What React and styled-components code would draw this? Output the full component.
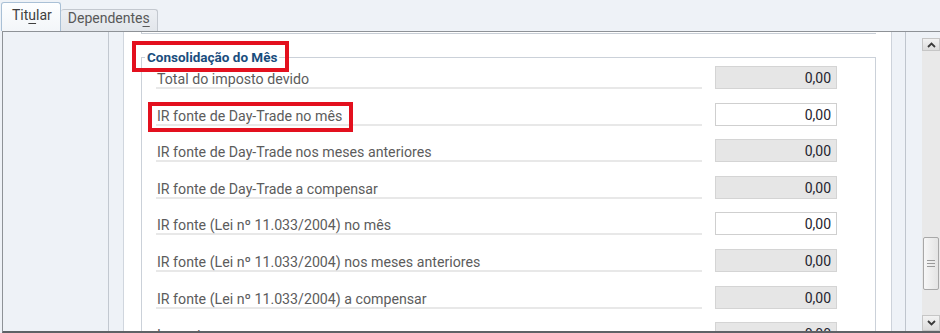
import React from 'react';
import styled, { createGlobalStyle, css } from 'styled-components';

const GlobalStyle = createGlobalStyle`
  html, body {
    margin: 0;
    padding: 0;
  }
  body {
    background: #eef2f7;
    font-family: Roboto, "Noto Sans", Arial, sans-serif;
    overflow: hidden;
  }
`;

const Page = styled.div`
  width: 940px;
  height: 333px;
  display: flex;
  flex-direction: column;
  overflow: hidden;
`;

const TabBar = styled.div`
  display: flex;
  align-items: flex-end;
  height: 31px;
  padding-left: 1px;
  flex-shrink: 0;
`;

const Tab = styled.div`
  box-sizing: border-box;
  font-size: 14px;
  line-height: 16px;
  border: 1px solid #c3c8cf;
  border-bottom: none;
  border-radius: 3px 3px 0 0;
  ${({ $active }) =>
    $active
      ? css`
          height: 29px;
          padding: 4px 8px 0 10px;
          color: #3f3f3f;
          background: linear-gradient(#fdfeff, #f3f6f9);
          border-color: #a9c0d6;
        `
      : css`
          height: 22px;
          padding: 0 7px 0 7px;
          color: #585858;
          background: linear-gradient(#eceff3, #e2e6eb);
          border-left: none;
        `}
`;

const Mnemonic = styled.span`
  text-decoration: underline;
  text-underline-offset: 3px;
`;

const Frame = styled.div`
  display: flex;
  height: 299px;
  margin-left: 2px;
  border-top: 1px solid #8e9297;
  border-left: 1px solid #8e9297;
  border-bottom: 2px solid #5e6266;
  flex-shrink: 0;
`;

const SidePanel = styled.div`
  width: 105px;
  flex-shrink: 0;
  background: #eef2f7;
  border-right: 1px solid #c2c8d0;
`;

const Gutter = styled.div`
  width: 14px;
  flex-shrink: 0;
  background: #eef2f7;
  border-right: 1px solid #d0d6de;
`;

const Content = styled.div`
  width: 767px;
  flex-shrink: 0;
  box-sizing: border-box;
  background: #fff;
  overflow: hidden;
  padding: 0 15px 0 17px;
`;

const PrevSectionEdge = styled.div`
  height: 1px;
  border-left: 1px solid #c8ced6;
  border-bottom: 1px solid #c8ced6;
`;

const Fieldset = styled.div`
  margin-top: 23px;
  border: 1px solid #cbd1d9;
  border-bottom: none;
  display: flex;
  flex-direction: column;
`;

const Annotated = css`
  position: relative;
  &::after {
    content: '';
    position: absolute;
    border: 4px solid #e3101e;
  }
`;

const Legend = styled.div`
  ${Annotated}
  align-self: flex-start;
  margin: -9px 0 0 3px;
  padding: 0 2px;
  background: #fff;
  font-size: 13.5px;
  line-height: 16px;
  font-weight: 700;
  color: #194d7d;
  &::after {
    top: -8px;
    bottom: -7px;
    left: -13px;
    right: -10px;
  }
`;

const Rows = styled.div`
  display: flex;
  flex-direction: column;
  gap: 13.6px;
  margin-top: 1px;
  padding: 0 38px 0 14px;
`;

const Row = styled.div`
  display: flex;
  align-items: flex-end;
  gap: 13px;
  height: 23px;
`;

const LabelCell = styled.div`
  flex: 1;
  height: 23px;
  box-sizing: border-box;
  display: flex;
  align-items: flex-end;
  border-bottom: 2px solid #e8e8e8;
  padding-left: 1px;
`;

const LabelText = styled.span`
  font-size: 14.2px;
  line-height: 16px;
  color: #5c5c5c;
  white-space: nowrap;
  ${({ $marked }) =>
    $marked &&
    css`
      ${Annotated}
      &::after {
        top: -6px;
        bottom: -8px;
        left: -9px;
        right: -11px;
      }
    `}
`;

const Field = styled.div`
  width: 122px;
  height: 23px;
  box-sizing: border-box;
  flex-shrink: 0;
  padding: 1px 5px 0 0;
  text-align: right;
  font-size: 14px;
  line-height: 20px;
  color: #1f2430;
  border: 1px solid ${({ $editable }) => ($editable ? '#cfcfcf' : '#d4d4d4')};
  background: ${({ $editable }) => ($editable ? '#ffffff' : '#e6e6e6')};
`;

const RightStrip = styled.div`
  flex-shrink: 0;
  background: #eef2f7;
  width: ${({ $w }) => $w}px;
  ${({ $edges }) =>
    $edges &&
    css`
      border-left: 1px solid #cdd3db;
      border-right: 1px solid #bfc5cd;
    `}
`;

const Scrollbar = styled.div`
  width: 18px;
  flex-shrink: 0;
  display: flex;
  flex-direction: column;
  padding-top: 6px;
  background: #eef2f7;
`;

const ScrollButton = styled.div`
  height: ${({ $h }) => $h}px;
  flex-shrink: 0;
  box-sizing: border-box;
  display: flex;
  align-items: center;
  justify-content: center;
  border: 1px solid #c6c6c6;
  background: linear-gradient(#f2f2f2, #dcdcdc);
`;

const Track = styled.div`
  flex: 1;
  background: #e9e9e9;
  display: flex;
  flex-direction: column;
`;

const Thumb = styled.div`
  box-sizing: border-box;
  margin-left: 1px;
  width: 16px;
  border: 1px solid #a8a8a8;
  border-radius: 2px;
  background: linear-gradient(90deg, #f7f7f7, #e4e4e4);
  display: flex;
  align-items: center;
  justify-content: center;
`;

const Chevron = ({ up }) => (
  <svg width="9" height="6" viewBox="0 0 9 6">
    <polyline
      points={up ? '1,5 4.5,1.5 8,5' : '1,1 4.5,4.5 8,1'}
      fill="none"
      stroke="#3a3a3a"
      strokeWidth="1.8"
    />
  </svg>
);

const Grip = () => (
  <svg width="8" height="7" viewBox="0 0 8 7">
    <path d="M0 0.5H8M0 3.5H8M0 6.5H8" stroke="#9a9a9a" strokeWidth="1" />
  </svg>
);

const rows = [
  { label: 'Total do imposto devido' },
  { label: 'IR fonte de Day-Trade no mês', editable: true, marked: true },
  { label: 'IR fonte de Day-Trade nos meses anteriores' },
  { label: 'IR fonte de Day-Trade a compensar' },
  { label: 'IR fonte (Lei nº 11.033/2004) no mês', editable: true },
  { label: 'IR fonte (Lei nº 11.033/2004) nos meses anteriores' },
  { label: 'IR fonte (Lei nº 11.033/2004) a compensar' },
  { label: 'Imposto a pagar' },
];

const App = () => (
  <Page>
    <GlobalStyle />
    <TabBar>
      <Tab $active>
        Tit<Mnemonic>u</Mnemonic>lar
      </Tab>
      <Tab>
        Dependente<Mnemonic>s</Mnemonic>
      </Tab>
    </TabBar>
    <Frame>
      <SidePanel />
      <Gutter />
      <Content>
        <PrevSectionEdge />
        <Fieldset>
          <Legend>Consolidação do Mês</Legend>
          <Rows>
            {rows.map((r) => (
              <Row key={r.label}>
                <LabelCell>
                  <LabelText $marked={r.marked}>{r.label}</LabelText>
                </LabelCell>
                <Field $editable={r.editable}>0,00</Field>
              </Row>
            ))}
          </Rows>
        </Fieldset>
      </Content>
      <RightStrip $w={13} $edges />
      <RightStrip $w={16} />
      <Scrollbar>
        <ScrollButton $h={13}>
          <Chevron up />
        </ScrollButton>
        <Track>
          <Thumb style={{ marginTop: 186, height: 53 }}>
            <Grip />
          </Thumb>
        </Track>
        <ScrollButton $h={16}>
          <Chevron />
        </ScrollButton>
      </Scrollbar>
    </Frame>
  </Page>
);

export default App;
